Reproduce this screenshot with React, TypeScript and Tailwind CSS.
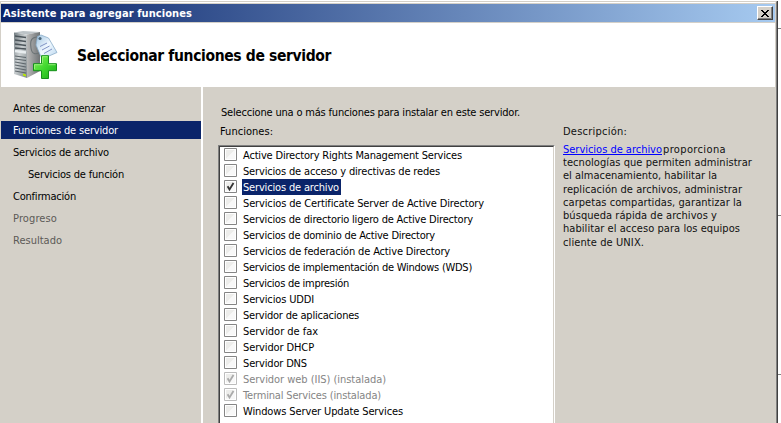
import { useLayoutEffect, useRef, useState } from "react";

// Spaces the letters so that a label fills exactly the given width.
function Label({ text, width, className = "" }: { text: string; width: number; className?: string }) {
  const ref = useRef<HTMLSpanElement>(null);
  const [spacing, setSpacing] = useState(0);
  useLayoutEffect(() => {
    const el = ref.current;
    if (!el) return;
    const natural = el.getBoundingClientRect().width - spacing * text.length;
    setSpacing((width - natural) / text.length);
  }, [text, width]);
  return (
    <span ref={ref} style={{ letterSpacing: spacing }} className={`inline-block translate-y-px whitespace-pre ${className}`}>
      {text}
    </span>
  );
}

const steps = [
  { text: "Antes de comenzar", width: 92, tone: "pl-3 text-black" },
  { text: "Funciones de servidor", width: 105, tone: "pl-3 bg-[#0a246a] text-white" },
  { text: "Servicios de archivo", width: 96, tone: "pl-3 text-black" },
  { text: "Servicios de función", width: 96, tone: "pl-[27px] text-black" },
  { text: "Confirmación", width: 63, tone: "pl-3 text-black" },
  { text: "Progreso", width: 44, tone: "pl-3 text-[#5c5a57]" },
  { text: "Resultado", width: 49, tone: "pl-3 text-[#5c5a57]" },
];

type Role = { text: string; width: number; checked?: boolean; selected?: boolean; disabled?: boolean };

const roles: Role[] = [
  { text: "Active Directory Rights Management Services", width: 219 },
  { text: "Servicios de acceso y directivas de redes", width: 197 },
  { text: "Servicios de archivo", width: 96, checked: true, selected: true },
  { text: "Servicios de Certificate Server de Active Directory", width: 241 },
  { text: "Servicios de directorio ligero de Active Directory", width: 230 },
  { text: "Servicios de dominio de Active Directory", width: 192 },
  { text: "Servicios de federación de Active Directory", width: 207 },
  { text: "Servicios de implementación de Windows (WDS)", width: 229 },
  { text: "Servicios de impresión", width: 106 },
  { text: "Servicios UDDI", width: 71 },
  { text: "Servidor de aplicaciones", width: 116 },
  { text: "Servidor de fax", width: 75 },
  { text: "Servidor DHCP", width: 71 },
  { text: "Servidor DNS", width: 64 },
  { text: "Servidor web (IIS) (instalada)", width: 143, checked: true, disabled: true },
  { text: "Terminal Services (instalada)", width: 138, checked: true, disabled: true },
  { text: "Windows Server Update Services", width: 160 },
];

const description = [
  { text: "tecnologías que permiten administrar", width: 189, height: "h-[13px]" },
  { text: "el almacenamiento, habilitar la", width: 154, height: "h-[14px]" },
  { text: "replicación de archivos, administrar", width: 179, height: "h-[13px]" },
  { text: "carpetas compartidas, garantizar la", width: 179, height: "h-[13px]" },
  { text: "búsqueda rápida de archivos y", width: 154, height: "h-[13px]" },
  { text: "habilitar el acceso para los equipos", width: 177, height: "h-[14px]" },
  { text: "cliente de UNIX.", width: 81, height: "h-[13px]" },
];

function ServerIcon() {
  return (
    <svg width="46" height="50" viewBox="0 0 46 50">
      <defs>
        <linearGradient id="front" x1="0" x2="1" y1="0" y2="1">
          <stop offset="0" stopColor="#737d82" />
          <stop offset=".45" stopColor="#cbd0d2" />
          <stop offset="1" stopColor="#7e878b" />
        </linearGradient>
        <linearGradient id="side" x1="0" x2="1">
          <stop offset="0" stopColor="#b8b8b8" />
          <stop offset="1" stopColor="#6f7375" />
        </linearGradient>
        <linearGradient id="tag" x1="0" x2="1" y1="0" y2="1">
          <stop offset="0" stopColor="#9fc3e0" />
          <stop offset=".5" stopColor="#f0f8ff" />
          <stop offset="1" stopColor="#b9d6ee" />
        </linearGradient>
        <linearGradient id="plus" x1="0" x2="1" y1="0" y2="1">
          <stop offset="0" stopColor="#8cf060" />
          <stop offset=".5" stopColor="#40d82e" />
          <stop offset="1" stopColor="#16a916" />
        </linearGradient>
      </defs>
      <path d="M1 1.5 10 0 27 1 14 3.5Z" fill="#bcc3c7" />
      <path d="M1 1.5 14 3.5V47L1 43Z" fill="url(#front)" />
      <path d="M14 3.5 27 1V40L14 47Z" fill="url(#side)" />
      <path d="M2 5 13 6.5M2 9 13 10.5M2 13 13 14.5M2 17 13 18" stroke="#4c555b" strokeWidth="1.3" />
      <path d="M2 20 13 21.5" stroke="#e8edef" strokeWidth="2.5" />
      <path d="M2 25 13 26.5M2 28 13 29.5M2 31 13 33M2 34 13 36M2 37 13 39M2 40 13 42" stroke="#5d666b" strokeWidth="1.2" />
      <path d="M10 42.5 13 43.5V45.5L10 44.5Z" fill="#b8e800" />
      <path d="M25 6C18 6 17 10 18 17C19 24 23 23 26 22" fill="none" stroke="#6b7376" strokeWidth="1.1" />
      <path d="M24.5 5.5 28 4 35.5 7 44 21.5 29 28 23 14Z" fill="url(#tag)" stroke="#8badc9" strokeWidth=".8" />
      <circle cx="27" cy="7.5" r="1.6" fill="#4b6679" />
      <path d="M27 15.5 34 12M29 19 36.5 15M31 22.5 39 18" stroke="#7f92c4" />
      <path d="M28.5 24.7H35.5V32.7H43.5V39.7H35.5V47.5H28.5V39.7H20.5V32.7H28.5Z" fill="url(#plus)" stroke="#15901a" strokeLinejoin="round" />
      <path d="M29.5 32V25.7H34.5M21.5 38V33.7H29.5M35.5 33.7H42.5" fill="none" stroke="#a5f585" strokeWidth=".8" />
    </svg>
  );
}

function CheckBox({ checked, disabled }: { checked?: boolean; disabled?: boolean }) {
  return (
    <svg className="mt-px shrink-0" width="13" height="13" viewBox="0 0 13 13">
      <path d="M.5.5H12.5V12.5H.5Z" fill="#fff" stroke={disabled ? "#bcbcbc" : "#858585"} />
      <path d="M2 2H11L2 11Z" fill="#ededeb" />
      <path d="M2 11 11 2V11Z" fill="#f8f8f8" />
      {checked && (
        <path d="M3.6 6.3 5.5 9.5 9.5 3" fill="none" stroke={disabled ? "#aaa" : "#333"} strokeWidth="1.8" />
      )}
    </svg>
  );
}

export default function App() {
  return (
    <div className="flex h-[423px] w-[781px] overflow-hidden bg-white font-['DejaVu_Sans_Condensed','DejaVu_Sans',sans-serif] text-[11px] leading-4 text-black [font-stretch:condensed]">
      <div className="flex h-full w-[778px] flex-col">
        <div className="h-px w-full bg-white" />
        <div className="flex min-h-0 flex-1 border-r border-r-[#404040]">
          <div className="flex min-h-0 flex-1 flex-col border-l border-r border-t border-l-[#d4d0c8] border-r-[#808080] border-t-[#d4d0c8]">
            <div className="flex min-h-0 flex-1 flex-col border-r border-t border-r-[#d4d0c8] border-t-white">
              <div className="h-px shrink-0 bg-[#d4d0c8]" />
              <div className="flex h-[18px] shrink-0 items-center justify-between bg-linear-to-r/srgb from-[#0a246a] to-[#a6caf0] pl-[2px] pr-[2px] text-white">
                <Label text="Asistente para agregar funciones" width={189} className="font-bold" />
                <button className="flex h-[14px] w-4 items-center justify-center border border-b-[#404040] border-l-white border-r-[#404040] border-t-white bg-[#d4d0c8] shadow-[inset_-1px_-1px_#808080]">
                  <svg width="8" height="7" viewBox="0 0 8 7" shapeRendering="crispEdges">
                    <path d="M0 0h2v1h1v1h2V1h1V0h2v1H7v1H6v1H5v1h1v1h1v1h1v1H6V6H5V5H3v1H2v1H0V6h1V5h1V4h1V3H2V2H1V1H0Z" />
                  </svg>
                </button>
              </div>
              <div className="h-px shrink-0 bg-[#d4d0c8]" />
              <header className="flex h-16 shrink-0 items-start bg-white pl-3 pt-2">
                <ServerIcon />
                <Label text="Seleccionar funciones de servidor" width={254} className="ml-[18px] mt-3 text-[15.5px] font-bold leading-6" />
              </header>
              <div className="flex min-h-0 flex-1 bg-[#d4d0c8]">
                <nav className="flex w-[202px] shrink-0 flex-col gap-1 border-r-2 border-r-white pt-3">
                  {steps.map((step) => (
                    <div key={step.text} className={`flex h-[18px] items-center ${step.tone}`}>
                      <Label text={step.text} width={step.width} />
                    </div>
                  ))}
                </nav>
                <main className="flex min-w-0 flex-1 flex-col pl-[15px] pt-[17px]">
                  <div className="h-4 pl-[3px]">
                    <Label text="Seleccione una o más funciones para instalar en este servidor." width={299} />
                  </div>
                  <div className="mt-[3px] flex min-h-0 flex-1">
                    <section className="flex w-[337px] shrink-0 flex-col">
                      <div className="h-[22px] pl-[2px]">
                        <Label text="Funciones:" width={53} />
                      </div>
                      <div className="flex min-h-0 flex-1 border-l border-r border-t border-l-[#808080] border-r-white border-t-[#808080]">
                        <ul className="min-h-0 flex-1 overflow-hidden border-l border-r border-t border-l-[#404040] border-r-[#d4d0c8] border-t-[#404040] bg-white pl-1">
                          {roles.map((role) => (
                            <li key={role.text} className="flex h-4">
                              <CheckBox checked={role.checked} disabled={role.disabled} />
                              <span className={`ml-[5px] h-4 px-px ${role.selected ? "bg-[#0a246a] pr-[2px] text-white" : role.disabled ? "text-[#858585]" : "text-black"}`}>
                                <Label text={role.text} width={role.width} />
                              </span>
                            </li>
                          ))}
                        </ul>
                      </div>
                    </section>
                    <aside className="ml-2 flex flex-col text-[#111]">
                      <Label text="Descripción:" width={64} className="h-[18px] self-start" />
                      <div className="flex h-[13px]">
                        <a className="text-[#00f]">
                          <Label text="Servicios de archivo" width={99} className="underline" />
                        </a>
                        <Label text="proporciona" width={63} className="ml-px" />
                      </div>
                      {description.map((line) => (
                        <div key={line.text} className={line.height}>
                          <Label text={line.text} width={line.width} />
                        </div>
                      ))}
                    </aside>
                  </div>
                </main>
              </div>
            </div>
          </div>
        </div>
      </div>
      <div className="flex w-[3px] flex-col">
        <div className="mt-7 h-px bg-[#808080]" />
        <div className="mt-[186px] h-px bg-[#808080]" />
        <div className="mt-[158px] h-px bg-[#808080]" />
      </div>
    </div>
  );
}
